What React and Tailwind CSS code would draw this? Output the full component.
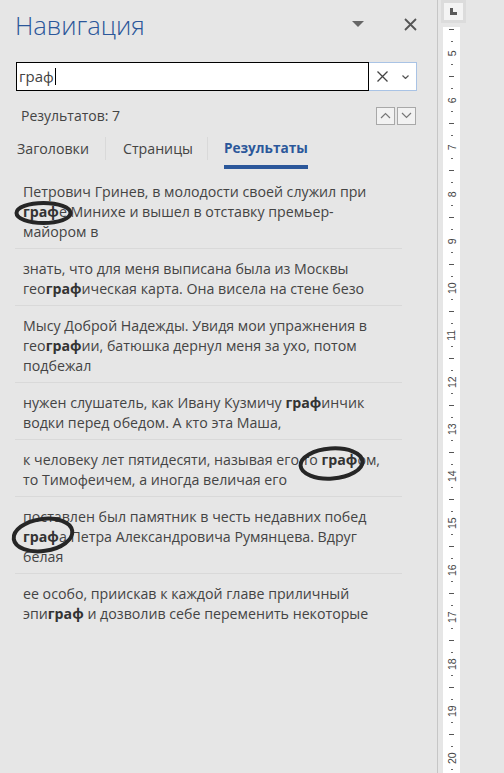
import React from 'react'

const font = { fontFamily: '"Open Sans", "Noto Sans", sans-serif' }

const results = [
  ['Петрович Гринев, в молодости своей служил при', '**граф**е Минихе и вышел в отставку премьер-', 'майором в'],
  ['знать, что для меня выписана была из Москвы', 'гео**граф**ическая карта. Она висела на стене безо'],
  ['Мысу Доброй Надежды. Увидя мои упражнения в', 'гео**граф**ии, батюшка дернул меня за ухо, потом', 'подбежал'],
  ['нужен слушатель, как Ивану Кузмичу **граф**инчик', 'водки перед обедом. А кто эта Маша,'],
  ['к человеку лет пятидесяти, называя его то **граф**ом,', 'то Тимофеичем, а иногда величая его'],
  ['поставлен был памятник в честь недавних побед', '**граф**а Петра Александровича Румянцева. Вдруг', 'белая'],
  ['ее особо, приискав к каждой главе приличный', 'эпи**граф** и дозволив себе переменить некоторые'],
]

const Line = ({ text }) => (
  <div className="whitespace-nowrap">
    {text.split('**').map((part, i) =>
      i % 2 === 1 ? <b key={i} className="font-bold text-[#333]">{part}</b> : <span key={i}>{part}</span>
    )}
  </div>
)

// quarter-cm marks of the vertical ruler, 4.5 .. 20.25
const marks = Array.from({ length: 64 }, (_, i) => 4.5 + i * 0.25)

const Ruler = () => (
  <div className="flex flex-col h-full">
    <div className="ml-[3px] w-[25px] h-[23px] bg-[#dcdcdc] p-[3px]">
      <div className="w-full h-full bg-[#f4f4f4] flex items-center justify-center">
        <div className="w-[7px] h-[7px] border-l-[3px] border-b-[3px] border-[#5a5a5a]" />
      </div>
    </div>
    <div className="ml-[5px] mt-[4px] w-[17px] flex-1 bg-white overflow-hidden">
      <div className="-mt-[3.4px] flex flex-col">
        {marks.map((m) => (
          <div key={m} className="h-[11.75px] flex items-center justify-center">
            {Number.isInteger(m) ? (
              <span className="-rotate-90 text-[10.5px] leading-none text-[#444]" style={{ fontFamily: '"Liberation Sans", sans-serif' }}>{m}</span>
            ) : m % 1 === 0.5 ? (
              <div className="w-[5px] h-px bg-[#555]" />
            ) : (
              <div className="w-[2px] h-px bg-[#666]" />
            )}
          </div>
        ))}
      </div>
    </div>
  </div>
)

const Chevron = ({ up }) => (
  <svg width="11" height="7" viewBox="0 0 11 7">
    <path d={up ? 'M1 6 L5.5 1.5 L10 6' : 'M1 1 L5.5 5.5 L10 1'} fill="none" stroke="#777" strokeWidth="1.2" />
  </svg>
)

export default function App() {
  return (
    <div className="relative w-[504px] h-[773px] overflow-hidden bg-[#e6e6e6] flex text-[#444]" style={font}>
      {/* Navigation pane */}
      <div className="w-[438px] h-full border-r border-[#c6c6c6] flex flex-col">
        <div className="h-[54px] flex items-center pl-[15px] pr-[20px]">
          <h1 className="flex-1 text-[25.5px] font-light text-[#2b579a] leading-none -mt-[2px]">Навигация</h1>
          <svg width="12" height="7" viewBox="0 0 12 7" className="mr-[40px] -mt-[6px]">
            <path d="M0 0 H12 L6 6 Z" fill="#666" />
          </svg>
          <svg width="13" height="13" viewBox="0 0 13 13" className="-mt-[6px]">
            <path d="M1 1 L12 12 M12 1 L1 12" stroke="#555" strokeWidth="1.8" />
          </svg>
        </div>

        {/* Search box */}
        <div className="ml-[16px] mt-[8px] flex h-[29px]">
          <div className="w-[353px] h-full border border-black bg-white flex items-center pl-[2px]">
            <span className="text-[15px] text-[#444]">граф</span>
            <div className="w-px h-[17px] bg-black ml-px" />
          </div>
          <div className="w-[48px] h-full border-y border-r border-[#a9c3e5] bg-white flex items-center">
            <svg width="11" height="11" viewBox="0 0 11 11" className="ml-[8px]">
              <path d="M0.5 0.5 L10.5 10.5 M10.5 0.5 L0.5 10.5" stroke="#444" strokeWidth="1.3" />
            </svg>
            <svg width="7" height="4" viewBox="0 0 7 4" className="ml-[14px]">
              <path d="M0.5 0.5 L3.5 3.5 L6.5 0.5" fill="none" stroke="#555" strokeWidth="1.2" />
            </svg>
          </div>
        </div>

        {/* Count row */}
        <div className="mt-[15px] h-[19px] flex items-center pl-[21px] pr-[21px]">
          <span className="flex-1 text-[14px]">Результатов: 7</span>
          <div className="flex gap-[2px]">
            <div className="w-[19px] h-[18px] border border-[#a8a8a8] bg-[#f2f2f2] flex items-center justify-center"><Chevron up /></div>
            <div className="w-[19px] h-[18px] border border-[#a8a8a8] bg-[#f2f2f2] flex items-center justify-center"><Chevron /></div>
          </div>
        </div>

        {/* Tabs */}
        <div className="mt-[9px] h-[36px] flex items-stretch text-[14.2px]">
          <div className="pl-[17px] pr-[16px] flex items-center h-[29px]">Заголовки</div>
          <div className="w-px h-[23px] mt-[3px] bg-[#d9d9d9]" />
          <div className="pl-[17px] pr-[14px] flex items-center h-[29px]">Страницы</div>
          <div className="w-px h-[23px] mt-[3px] bg-[#d9d9d9]" />
          <div className="ml-[16px] flex flex-col">
            <div className="h-[29px] flex items-center font-bold text-[#2b579a] text-[13.6px]">Результаты</div>
            <div className="mt-[2px] h-[4px] bg-[#2b579a]" />
          </div>
        </div>

        {/* Results */}
        <div className="ml-[15px] w-[387px] mt-[2px] flex flex-col divide-y divide-[#d9d9d9] text-[14.2px] leading-[20px]">
          {results.map((lines, i) => (
            <div key={i} className="px-[8px] pt-[10px] pb-[6px]">
              {lines.map((l, j) => <Line key={j} text={l} />)}
            </div>
          ))}
        </div>
      </div>

      {/* Ruler */}
      <div className="flex-1 h-full">
        <Ruler />
      </div>

      {/* Hand-drawn marks over the results */}
      <svg className="absolute inset-0 pointer-events-none" width="504" height="773">
        <ellipse cx="43.5" cy="213" rx="27" ry="10" fill="none" stroke="#262626" strokeWidth="4" />
        <ellipse cx="331.5" cy="463.5" rx="31" ry="15" fill="none" stroke="#262626" strokeWidth="4" transform="rotate(-4 331.5 463.5)" />
        <ellipse cx="43" cy="535" rx="29.5" ry="16" fill="none" stroke="#262626" strokeWidth="4" transform="rotate(-8 43 535)" />
      </svg>
    </div>
  )
}
